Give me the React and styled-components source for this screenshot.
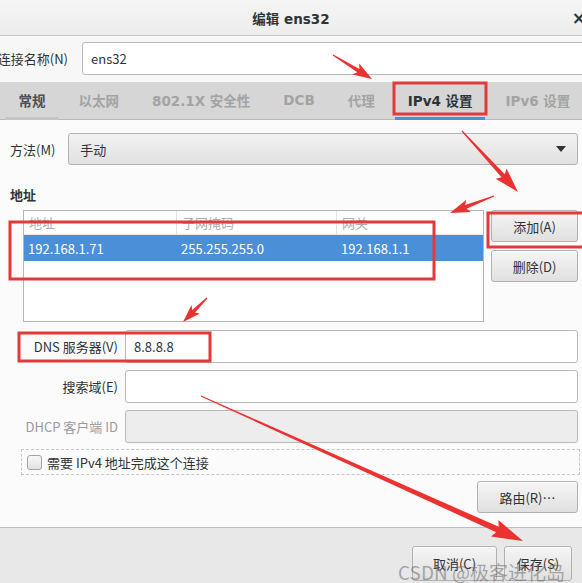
import React from "react";
import styled, { createGlobalStyle } from "styled-components";

const GlobalStyle = createGlobalStyle`
  html, body {
    margin: 0;
    padding: 0;
    background: #ffffff;
  }
  body {
    font-family: "Noto Sans CJK SC", "DejaVu Sans", sans-serif;
    font-size: 13px;
    color: #2e3436;
    overflow: hidden;
  }
  * {
    box-sizing: border-box;
  }
`;

const TABS = [
  { label: "常规", state: "visited" },
  { label: "以太网" },
  { label: "802.1X 安全性" },
  { label: "DCB" },
  { label: "代理" },
  { label: "IPv4 设置", state: "active" },
  { label: "IPv6 设置" },
];

const ARROWS = [
  { from: [333, 55], to: [372, 79], head: 16, headW: 13, shaft: 4 },
  { from: [462, 131], to: [518, 192], head: 22, headW: 15, shaft: 4.5 },
  { from: [494, 196], to: [450, 213], head: 17, headW: 13, shaft: 4 },
  { from: [207, 298], to: [183, 322], head: 15, headW: 12, shaft: 4 },
  { from: [201, 396], to: [523, 541], head: 28, headW: 18, shaft: 6 },
];

const MARKS = [
  { x: 394, y: 83, w: 92, h: 31 },
  { x: 10, y: 222, w: 424, h: 57 },
  { x: 488, y: 213, w: 96, h: 34 },
  { x: 19, y: 333, w: 191, h: 28 },
];

// tapered arrow: thin tail, wider shaft, triangle head
const arrowPoints = ({ from, to, head, headW, shaft }) => {
  const [x1, y1] = from;
  const [x2, y2] = to;
  const len = Math.hypot(x2 - x1, y2 - y1);
  const ux = (x2 - x1) / len;
  const uy = (y2 - y1) / len;
  const px = -uy;
  const py = ux;
  const bx = x2 - ux * head;
  const by = y2 - uy * head;
  const tail = 0.6;
  const pts = [
    [x1 + px * tail, y1 + py * tail],
    [bx + px * shaft / 2, by + py * shaft / 2],
    [bx - ux * 3 + px * headW / 2, by - uy * 3 + py * headW / 2],
    [x2, y2],
    [bx - ux * 3 - px * headW / 2, by - uy * 3 - py * headW / 2],
    [bx - px * shaft / 2, by - py * shaft / 2],
    [x1 - px * tail, y1 - py * tail],
  ];
  return pts.map(p => p.map(v => v.toFixed(1)).join(",")).join(" ");
};

const App = () => {
  return (
    <Window>
      <GlobalStyle />
      <TitleBar>
        <Title>编辑 ens32</Title>
        <Close>×</Close>
      </TitleBar>

      <NameRow>
        <NameLabel>连接名称(N)</NameLabel>
        <TextField value="ens32" readOnly />
      </NameRow>

      <TabBar>
        {TABS.map(tab => (
          <Tab key={tab.label} state={tab.state}>{tab.label}</Tab>
        ))}
      </TabBar>

      <Content>
        <MethodRow>
          <FieldLabel>方法(M)</FieldLabel>
          <Combo>
            <span>手动</span>
            <svg width="10" height="6" viewBox="0 0 10 6">
              <path d="M0 0 L10 0 L5 6 Z" fill="#2e3436" />
            </svg>
          </Combo>
        </MethodRow>

        <SectionHeading>地址</SectionHeading>

        <AddressArea>
          <Table>
            <TableRow header>
              <Cell header divider>地址</Cell>
              <Cell header divider>子网掩码</Cell>
              <Cell header>网关</Cell>
            </TableRow>
            <TableRow selected>
              <Cell>192.168.1.71</Cell>
              <Cell>255.255.255.0</Cell>
              <Cell>192.168.1.1</Cell>
            </TableRow>
          </Table>
          <ButtonColumn>
            <Button height="32px">添加(A)</Button>
            <Button height="32px">删除(D)</Button>
          </ButtonColumn>
        </AddressArea>

        <FormGrid>
          <FormLabel>DNS 服务器(V)</FormLabel>
          <TextField value="8.8.8.8" readOnly />
          <FormLabel>搜索域(E)</FormLabel>
          <TextField value="" readOnly />
          <FormLabel disabled>DHCP 客户端 ID</FormLabel>
          <TextField value="" readOnly disabled />
        </FormGrid>

        <CheckRow>
          <CheckBox />
          <span>需要 IPv4 地址完成这个连接</span>
        </CheckRow>

        <RouteButton>路由(R)…</RouteButton>
      </Content>

      <Footer>
        <Button width="85px" height="35px">取消(C)</Button>
        <Button width="68px" height="35px">保存(S)</Button>
        <Watermark>CSDN @极客进化岛</Watermark>
      </Footer>

      <Annotations width="582" height="583" viewBox="0 0 582 583">
        {MARKS.map((m, i) => (
          <rect key={i} x={m.x} y={m.y} width={m.w} height={m.h} fill="none" stroke="#e23a3a" strokeWidth="3" />
        ))}
        {ARROWS.map((a, i) => (
          <polygon key={i} points={arrowPoints(a)} fill="#ec3131" />
        ))}
      </Annotations>
    </Window>
  );
};

const Window = styled.div`
  position: relative;
  width: 582px;
  height: 583px;
  overflow: hidden;
  display: flex;
  flex-direction: column;
  background: #fbfbfb;
`;

const TitleBar = styled.header`
  flex: none;
  height: 36px;
  display: grid;
  grid-template-columns: 1fr auto 1fr;
  align-items: center;
  background: linear-gradient(#f5f5f5, #ededed);
  border-bottom: 1px solid #c4c4c4;
`;

const Title = styled.span`
  grid-column: 2;
  font-family: "DejaVu Sans", "Noto Sans CJK SC", sans-serif;
  font-weight: bold;
  font-size: 13.5px;
  color: #2e3436;
`;

const Close = styled.span`
  grid-column: 3;
  justify-self: end;
  margin-right: -4px;
  font-family: "DejaVu Sans", sans-serif;
  font-weight: bold;
  font-size: 17px;
  color: #2e3436;
`;

const NameRow = styled.div`
  flex: none;
  height: 46px;
  display: flex;
  align-items: center;
  gap: 14px;
  padding-bottom: 1px;
  margin-right: -4px;
  background: #f7f7f7;
`;

const NameLabel = styled.span`
  width: 68px;
  flex: none;
  display: flex;
  justify-content: flex-end;
  white-space: nowrap;
  color: #2e3436;
`;

const TextField = styled.input`
  flex: 1;
  min-width: 0;
  height: 33px;
  padding: 0 8px;
  border: 1px solid #b9b9b9;
  border-radius: 3px;
  background: ${props => (props.disabled ? "#ededed" : "#ffffff")};
  font-family: "Noto Sans CJK SC", "DejaVu Sans", sans-serif;
  font-size: 13px;
  color: #2e3436;
  outline: none;
`;

const TabBar = styled.nav`
  flex: none;
  height: 38px;
  display: flex;
  padding-left: 2px;
  background: #d6d6d6;
  border-bottom: 1px solid #b8b8b8;
`;

const Tab = styled.div`
  position: relative;
  display: flex;
  align-items: center;
  padding: 0 16.5px 2px;
  white-space: nowrap;
  font-family: "DejaVu Sans", "Noto Sans CJK SC", sans-serif;
  font-weight: bold;
  font-size: 13.5px;
  color: ${props =>
    props.state === "active" ? "#2e3436" : props.state === "visited" ? "#4d4f50" : "#a3a3a3"};

  &::after {
    content: "";
    position: absolute;
    left: 4px;
    right: 4px;
    bottom: -1px;
    height: 3px;
    background: ${props =>
      props.state === "active" ? "#4a90d9" : props.state === "visited" ? "#c4c4c4" : "transparent"};
  }
`;

const Content = styled.main`
  flex: 1;
  display: flex;
  flex-direction: column;
  padding: 13px 4px 0 10px;
  background: #fbfbfb;
`;

const MethodRow = styled.div`
  display: flex;
  align-items: center;
  gap: 13px;
`;

const FieldLabel = styled.span`
  white-space: nowrap;
`;

const Combo = styled.div`
  flex: 1;
  height: 32px;
  display: flex;
  align-items: center;
  justify-content: space-between;
  padding: 0 11px 0 11px;
  border: 1px solid #b3b3b3;
  border-radius: 3px;
  background: linear-gradient(#f2f2f2, #e1e1e1);
`;

const SectionHeading = styled.h3`
  margin: 21px 0 7px;
  font-size: 13px;
  line-height: 17px;
  font-weight: bold;
  color: #2e3436;
`;

const AddressArea = styled.div`
  display: flex;
  gap: 7px;
  padding-left: 13px;
`;

const Table = styled.div`
  flex: 1;
  height: 112px;
  border: 1px solid #b7b7b7;
  background: #ffffff;
`;

const TableRow = styled.div`
  display: grid;
  grid-template-columns: 153px 160px 1fr;
  height: ${props => (props.header ? "24px" : "26px")};
  background: ${props => (props.selected ? "#4a90d9" : "transparent")};
  color: ${props => (props.selected ? "#ffffff" : "#2e3436")};
  border-bottom: ${props => (props.header ? "1px solid #e6e6e6" : "none")};
`;

const Cell = styled.div`
  display: flex;
  align-items: center;
  padding-left: ${props => (props.header ? "5px" : "4px")};
  color: ${props => (props.header ? "#adadad" : "inherit")};
  border-right: ${props => (props.divider ? "1px solid #e2e2e2" : "none")};
  white-space: nowrap;
`;

const ButtonColumn = styled.div`
  width: 87px;
  flex: none;
  display: flex;
  flex-direction: column;
  gap: 8px;
`;

const Button = styled.button`
  width: ${props => props.width || "100%"};
  height: ${props => props.height || "32px"};
  padding: 0;
  border: 1px solid #b1b1b1;
  border-radius: 3px;
  background: linear-gradient(#f5f5f5, #e0e0e0);
  box-shadow: inset 0 1px #ffffff;
  font-family: "Noto Sans CJK SC", "DejaVu Sans", sans-serif;
  font-size: 13px;
  color: #2e3436;
`;

const FormGrid = styled.div`
  display: grid;
  grid-template-columns: 95px 1fr;
  column-gap: 7px;
  row-gap: 7px;
  margin-top: 8px;
  padding-left: 13px;
  align-items: center;
`;

const FormLabel = styled.span`
  text-align: right;
  white-space: nowrap;
  color: ${props => (props.disabled ? "#9a9a9a" : "#2e3436")};
`;

const CheckRow = styled.label`
  display: flex;
  align-items: center;
  gap: 5px;
  height: 26px;
  margin: 6px -2px 0 11px;
  padding-left: 5px;
  border: 1px dashed #c6c6c6;
`;

const CheckBox = styled.span`
  width: 15px;
  height: 15px;
  border: 1px solid #a2a2a2;
  border-radius: 3px;
  background: linear-gradient(#f7f7f7, #e4e4e4);
`;

const RouteButton = styled(Button)`
  align-self: flex-end;
  width: 101px;
  height: 32px;
  margin-top: 6px;
`;

const Footer = styled.footer`
  position: relative;
  flex: none;
  height: 56px;
  display: flex;
  justify-content: flex-end;
  align-items: flex-start;
  gap: 7px;
  padding: 18px 10px 0 0;
  background: #e8e8e8;
  border-top: 1px solid #bdbdbd;
`;

const Watermark = styled.span`
  position: absolute;
  left: 398px;
  top: 33px;
  font-family: "Noto Sans CJK SC", "Liberation Sans", sans-serif;
  font-size: 19px;
  line-height: 22px;
  color: rgba(95, 95, 95, 0.5);
  white-space: nowrap;
  pointer-events: none;
`;

const Annotations = styled.svg`
  position: absolute;
  left: 0;
  top: 0;
  pointer-events: none;
`;

export default App;
